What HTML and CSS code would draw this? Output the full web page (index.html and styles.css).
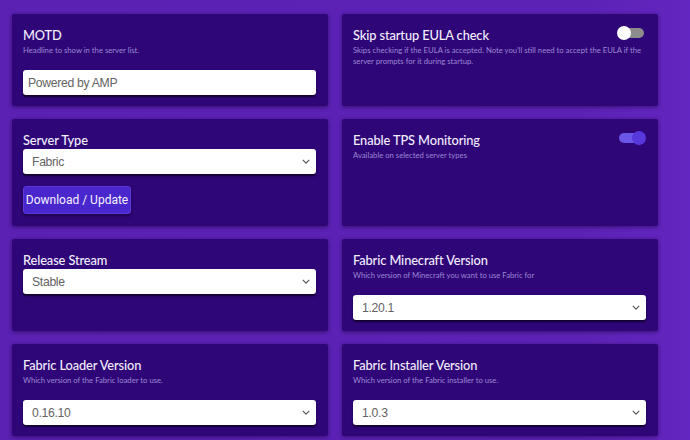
FILE: index.html
```html
<!DOCTYPE html>
<html>
<head>
<meta charset="utf-8">
<link rel="stylesheet" href="styles.css">
</head>
<body>
<div class="grid">
  <div class="card">
    <div class="title">MOTD</div>
    <div class="desc">Headline to show in the server list.</div>
    <div class="field spaced"><div class="input">Powered by AMP</div></div>
  </div>
  <div class="card">
    <div class="head">
      <div class="title">Skip startup EULA check</div>
      <div class="toggle off"><span class="knob"></span></div>
    </div>
    <div class="desc">Skips checking if the EULA is accepted. Note you'll still need to accept the EULA if the server prompts for it during startup.</div>
  </div>

  <div class="card">
    <div class="title">Server Type</div>
    <div class="field"><div class="input select">Fabric<svg class="chev" viewBox="0 0 10 6" width="8" height="5"><path d="M1 1l4 4 4-4" fill="none" stroke="#555" stroke-width="1.4"/></svg></div></div>
    <div class="btnrow"><button class="btn">Download / Update</button></div>
  </div>
  <div class="card">
    <div class="head">
      <div class="title">Enable TPS Monitoring</div>
      <div class="toggle on"><span class="knob"></span></div>
    </div>
    <div class="desc">Available on selected server types</div>
  </div>

  <div class="card">
    <div class="title">Release Stream</div>
    <div class="field"><div class="input select">Stable<svg class="chev" viewBox="0 0 10 6" width="8" height="5"><path d="M1 1l4 4 4-4" fill="none" stroke="#555" stroke-width="1.4"/></svg></div></div>
  </div>
  <div class="card">
    <div class="title">Fabric Minecraft Version</div>
    <div class="desc">Which version of Minecraft you want to use Fabric for</div>
    <div class="field spaced"><div class="input select">1.20.1<svg class="chev" viewBox="0 0 10 6" width="8" height="5"><path d="M1 1l4 4 4-4" fill="none" stroke="#555" stroke-width="1.4"/></svg></div></div>
  </div>

  <div class="card">
    <div class="title">Fabric Loader Version</div>
    <div class="desc">Which version of the Fabric loader to use.</div>
    <div class="field spaced"><div class="input select">0.16.10<svg class="chev" viewBox="0 0 10 6" width="8" height="5"><path d="M1 1l4 4 4-4" fill="none" stroke="#555" stroke-width="1.4"/></svg></div></div>
  </div>
  <div class="card">
    <div class="title">Fabric Installer Version</div>
    <div class="desc">Which version of the Fabric installer to use.</div>
    <div class="field spaced"><div class="input select">1.0.3<svg class="chev" viewBox="0 0 10 6" width="8" height="5"><path d="M1 1l4 4 4-4" fill="none" stroke="#555" stroke-width="1.4"/></svg></div></div>
  </div>
</div>
</body>
</html>
```
FILE: styles.css
```css
html, body {
  margin: 0;
  padding: 0;
}
body {
  width: 690px;
  height: 440px;
  overflow: hidden;
  background: linear-gradient(90deg, #5a21b3 0%, #5c22b6 85%, #6326c0 100%);
  font-family: "Lato", "Liberation Sans", sans-serif;
}
.grid {
  display: grid;
  grid-template-columns: 316px 316px;
  column-gap: 14px;
  row-gap: 13px;
  padding: 14px 0 0 12px;
}
.card {
  background: #2f0677;
  box-shadow: 0 1px 4px rgba(20, 0, 50, 0.55);
  border-radius: 2px;
  padding: 13px 12px 11px 11px;
  display: flex;
  flex-direction: column;
}
.head {
  display: flex;
  justify-content: space-between;
  align-items: flex-start;
}
.title {
  color: #f3eeff;
  font-size: 12.8px;
  line-height: 16px;
  font-weight: 500;
  letter-spacing: -0.1px;
}
.desc {
  color: #9c87d6;
  font-size: 7.7px;
  line-height: 11px;
  margin-top: 2px;
}
.field {
  margin-top: 1px;
}
.field.spaced {
  margin-top: 14px;
}
.input {
  background: #fff;
  height: 25px;
  border-radius: 3px;
  box-shadow: 0 2px 2px rgba(0, 0, 0, 0.6);
  display: flex;
  align-items: center;
  padding: 0 6px 0 5px;
  color: #636363;
  font-family: "Liberation Sans", "Arial", sans-serif;
  font-size: 12.2px;
  letter-spacing: -0.3px;
  box-sizing: border-box;
}
.select {
  justify-content: space-between;
  padding-left: 9px;
}
.chev {
  display: block;
}
.btnrow {
  margin-top: 12px;
  margin-bottom: 1px;
  display: flex;
}
.btn {
  background: #4a27cc;
  border: 1px solid #5a3ad8;
  border-radius: 3px;
  color: #f4f0ff;
  font-family: "Roboto", "Liberation Sans", sans-serif;
  font-size: 12px;
  height: 28px;
  width: 108px;
  padding: 0;
  box-shadow: 0 2px 3px rgba(0, 0, 0, 0.4);
}
.toggle {
  position: relative;
  width: 29px;
  height: 14px;
  margin-top: -1px;
  flex: none;
}
.toggle::before {
  content: "";
  position: absolute;
  left: 2px;
  right: 2px;
  top: 2px;
  height: 10px;
  border-radius: 5px;
}
.toggle.off::before { background: #8c8c8c; }
.toggle.on::before { background: #6b56ea; }
.knob {
  position: absolute;
  top: 0;
  width: 14px;
  height: 14px;
  border-radius: 50%;
}
.toggle.off .knob { left: 0; background: #ffffff; }
.toggle.on .knob { right: 0; background: #5638dd; }
```
